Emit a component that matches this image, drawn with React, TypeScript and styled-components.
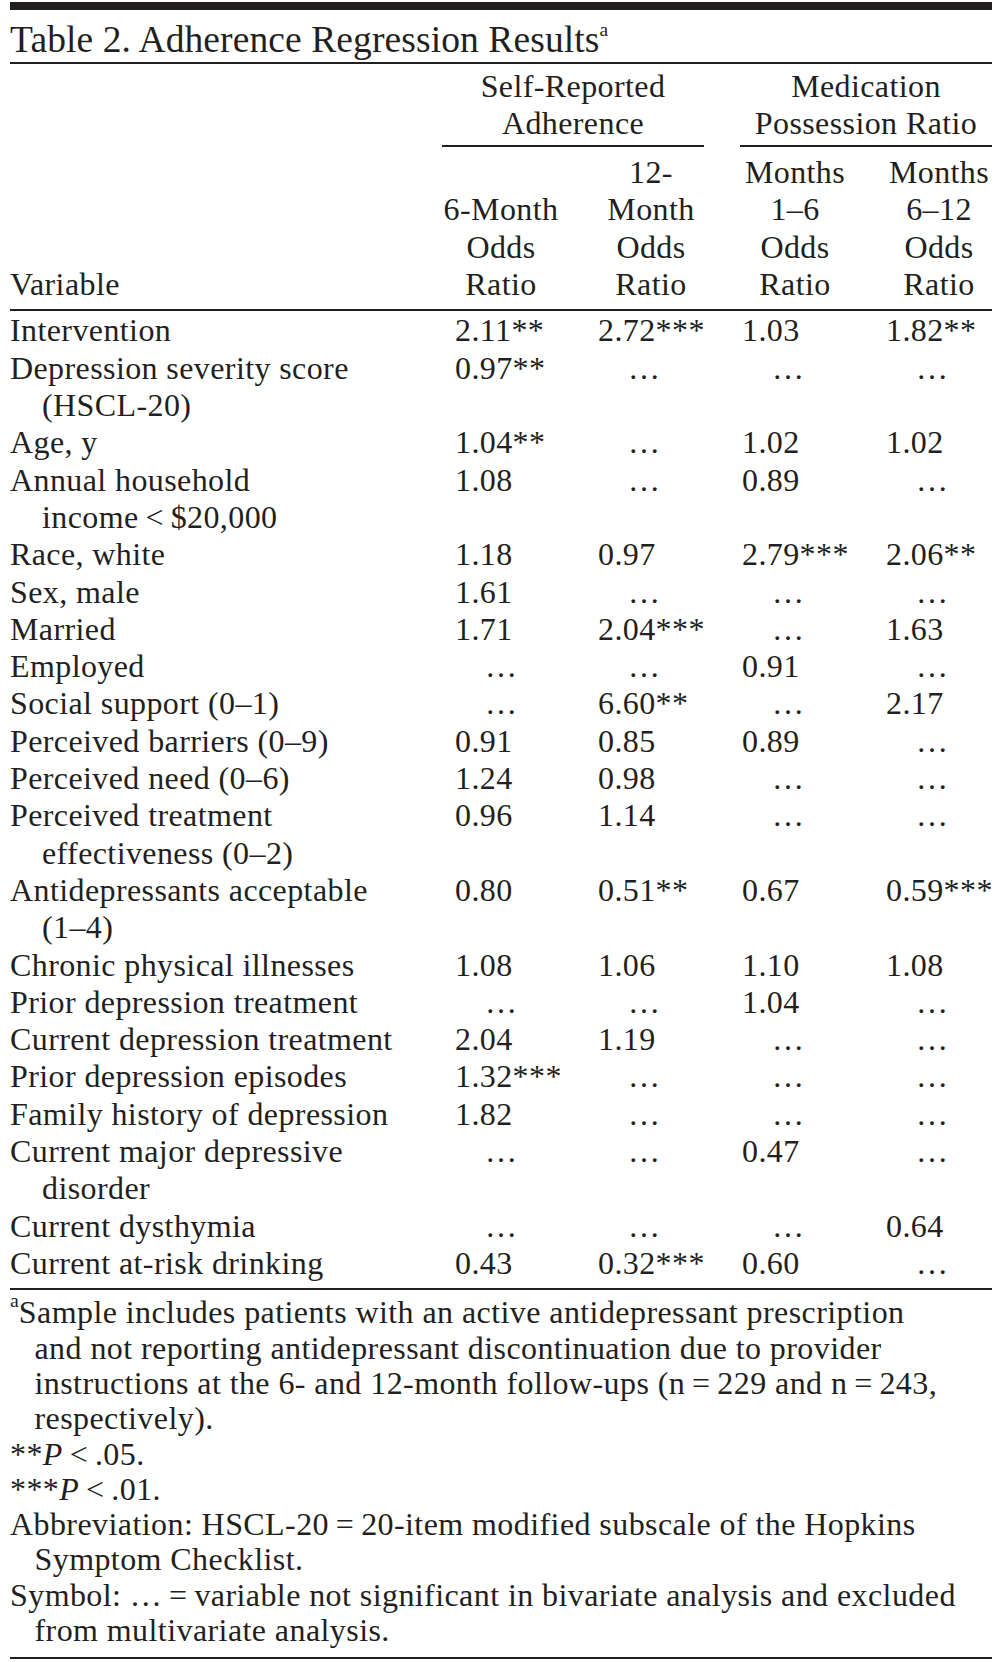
import React from "react";
import styled, { createGlobalStyle } from "styled-components";

const INK = "#231f20";
const COLS = "432px 156px 142px 146px 106px";
const LINE = "37.3px";

const GlobalStyle = createGlobalStyle`
  html, body { margin: 0; padding: 0; background: #ffffff; }
  body {
    font-family: "Liberation Serif", "Times New Roman", serif;
    color: ${INK};
  }
`;

const Page = styled.div`
  width: 982px;
  padding: 2px 11px 2px 10px;
`;

const TopBar = styled.div`
  height: 8px;
  background: ${INK};
`;

const Title = styled.h1`
  margin: 8.3px 0 0;
  font-weight: 400;
  font-size: 37.5px;
  line-height: 44px;
  letter-spacing: 0.1px;
  white-space: nowrap;
  border-bottom: 2px solid ${INK};
`;

const Sup = styled.sup<{ $size?: number }>`
  font-size: ${(p) => p.$size ?? 0.52}em;
  vertical-align: 0.8em;
  line-height: 0;
  letter-spacing: 0;
`;

const HeaderGrid = styled.div`
  display: grid;
  grid-template-columns: ${COLS};
  row-gap: 7.4px;
  padding: 3.7px 0 6px;
  border-bottom: 2px solid ${INK};
  font-size: 32px;
  line-height: ${LINE};
  letter-spacing: 0.4px;
`;

const SpannerCell = styled.div<{ $from: number; $to: number; $gap: number }>`
  grid-column: ${(p) => p.$from} / ${(p) => p.$to};
  padding-right: ${(p) => p.$gap}px;
`;

const SpannerLabel = styled.div`
  text-align: center;
  padding-bottom: 2px;
  border-bottom: 2px solid ${INK};
`;

const VarHead = styled.div`
  grid-column: 1;
  align-self: end;
`;

const ColHead = styled.div<{ $gap: number }>`
  align-self: end;
  display: flex;
  flex-direction: column;
  align-items: center;
  padding-right: ${(p) => p.$gap}px;
  white-space: nowrap;
`;

const BodyGrid = styled.div`
  display: grid;
  grid-template-columns: ${COLS};
  padding: 1.3px 0 5.7px;
  border-bottom: 2px solid ${INK};
  font-size: 32px;
  line-height: ${LINE};
  letter-spacing: 0.4px;
`;

const VarCell = styled.div`
  display: flex;
  flex-direction: column;
`;

const VarLine = styled.span<{ $indent: boolean }>`
  white-space: nowrap;
  padding-left: ${(p) => (p.$indent ? 32 : 0)}px;
`;

const ValueCell = styled.div<{ $pad: number }>`
  padding-left: ${(p) => p.$pad}px;
  white-space: nowrap;
`;

const Dots = styled.span`
  margin-left: 30px;
`;

const Notes = styled.div`
  padding: 5.5px 0 8.5px;
  border-bottom: 2px solid ${INK};
  font-size: 32px;
  line-height: 35.3px;
  letter-spacing: 0.42px;
`;

const NoteLine = styled.div<{ $indent: boolean }>`
  white-space: nowrap;
  padding-left: ${(p) => (p.$indent ? 24.5 : 0)}px;
`;

const Ital = styled.i`
  font-style: italic;
`;

const T = "\u2009";
const E = "…";

type Row = { label: string[]; values: string[] };

const rows: Row[] = [
  { label: ["Intervention"], values: ["2.11**", "2.72***", "1.03", "1.82**"] },
  { label: ["Depression severity score", "(HSCL-20)"], values: ["0.97**", E, E, E] },
  { label: ["Age, y"], values: ["1.04**", E, "1.02", "1.02"] },
  { label: ["Annual household", `income${T}<${T}$20,000`], values: ["1.08", E, "0.89", E] },
  { label: ["Race, white"], values: ["1.18", "0.97", "2.79***", "2.06**"] },
  { label: ["Sex, male"], values: ["1.61", E, E, E] },
  { label: ["Married"], values: ["1.71", "2.04***", E, "1.63"] },
  { label: ["Employed"], values: [E, E, "0.91", E] },
  { label: ["Social support (0–1)"], values: [E, "6.60**", E, "2.17"] },
  { label: ["Perceived barriers (0–9)"], values: ["0.91", "0.85", "0.89", E] },
  { label: ["Perceived need (0–6)"], values: ["1.24", "0.98", E, E] },
  { label: ["Perceived treatment", "effectiveness (0–2)"], values: ["0.96", "1.14", E, E] },
  { label: ["Antidepressants acceptable", "(1–4)"], values: ["0.80", "0.51**", "0.67", "0.59***"] },
  { label: ["Chronic physical illnesses"], values: ["1.08", "1.06", "1.10", "1.08"] },
  { label: ["Prior depression treatment"], values: [E, E, "1.04", E] },
  { label: ["Current depression treatment"], values: ["2.04", "1.19", E, E] },
  { label: ["Prior depression episodes"], values: ["1.32***", E, E, E] },
  { label: ["Family history of depression"], values: ["1.82", E, E, E] },
  { label: ["Current major depressive", "disorder"], values: [E, E, "0.47", E] },
  { label: ["Current dysthymia"], values: [E, E, E, "0.64"] },
  { label: ["Current at-risk drinking"], values: ["0.43", "0.32***", "0.60", E] },
];

const valuePad = [13, 0, 2, 0];
const headGap = [38, 36, 36, 0];
const colHeads: string[][] = [
  ["6-Month", "Odds", "Ratio"],
  ["12-", "Month", "Odds", "Ratio"],
  ["Months", "1–6", "Odds", "Ratio"],
  ["Months", "6–12", "Odds", "Ratio"],
];

export default function App() {
  return (
    <>
      <GlobalStyle />
      <Page>
        <TopBar />
        <Title>
          Table 2. Adherence Regression Results<Sup>a</Sup>
        </Title>
        <HeaderGrid>
          <SpannerCell $from={2} $to={4} $gap={36}>
            <SpannerLabel>
              Self-Reported
              <br />
              Adherence
            </SpannerLabel>
          </SpannerCell>
          <SpannerCell $from={4} $to={6} $gap={0}>
            <SpannerLabel>
              Medication
              <br />
              Possession Ratio
            </SpannerLabel>
          </SpannerCell>
          <VarHead>Variable</VarHead>
          {colHeads.map((lines, i) => (
            <ColHead key={i} $gap={headGap[i]}>
              {lines.map((l) => (
                <span key={l}>{l}</span>
              ))}
            </ColHead>
          ))}
        </HeaderGrid>
        <BodyGrid>
          {rows.map((r) => (
            <React.Fragment key={r.label[0]}>
              <VarCell>
                {r.label.map((l, j) => (
                  <VarLine key={j} $indent={j > 0}>
                    {l}
                  </VarLine>
                ))}
              </VarCell>
              {r.values.map((v, i) => (
                <ValueCell key={i} $pad={valuePad[i]}>
                  {v === E ? <Dots>{E}</Dots> : v}
                </ValueCell>
              ))}
            </React.Fragment>
          ))}
        </BodyGrid>
        <Notes>
          <NoteLine $indent={false}>
            <Sup $size={0.62}>a</Sup>Sample includes patients with an active antidepressant prescription
          </NoteLine>
          <NoteLine $indent>
            and not reporting antidepressant discontinuation due to provider
          </NoteLine>
          <NoteLine $indent>
            instructions at the 6- and 12-month follow-ups (n{T}={T}229 and n{T}={T}243,
          </NoteLine>
          <NoteLine $indent>respectively).</NoteLine>
          <NoteLine $indent={false}>
            **<Ital>P</Ital>{T}&lt;{T}.05.
          </NoteLine>
          <NoteLine $indent={false}>
            ***<Ital>P</Ital>{T}&lt;{T}.01.
          </NoteLine>
          <NoteLine $indent={false}>
            Abbreviation: HSCL-20{T}={T}20-item modified subscale of the Hopkins
          </NoteLine>
          <NoteLine $indent>Symptom Checklist.</NoteLine>
          <NoteLine $indent={false}>
            Symbol: …{T}={T}variable not significant in bivariate analysis and excluded
          </NoteLine>
          <NoteLine $indent>from multivariate analysis.</NoteLine>
        </Notes>
      </Page>
    </>
  );
}
